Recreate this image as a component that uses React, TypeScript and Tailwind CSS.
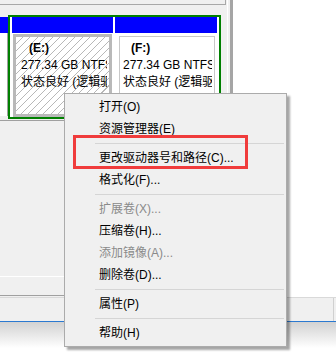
import React from "react";

type MenuEntry = { label: string; disabled?: boolean } | "sep";

const MENU: MenuEntry[] = [
  { label: "打开(O)" },
  { label: "资源管理器(E)" },
  "sep",
  { label: "更改驱动器号和路径(C)..." },
  { label: "格式化(F)..." },
  "sep",
  { label: "扩展卷(X)...", disabled: true },
  { label: "压缩卷(H)..." },
  { label: "添加镜像(A)...", disabled: true },
  { label: "删除卷(D)..." },
  "sep",
  { label: "属性(P)" },
  "sep",
  { label: "帮助(H)" },
];

const VolumeText = ({ letter }: { letter: string }) => (
  <div className="overflow-hidden whitespace-nowrap text-[12px] leading-[17px] text-black">
    <div className="pl-[8px] font-bold">({letter}:)</div>
    <div>277.34 GB NTFS</div>
    <div>状态良好 (逻辑驱动器)</div>
  </div>
);

const ContextMenu = () => (
  <div className="absolute left-[64px] top-[93px] w-[223px] border border-[#ababab] bg-[#f0f0f0] py-[2px] shadow-[3px_3px_2px_rgba(0,0,0,0.35)]">
    {MENU.map((item, i) =>
      item === "sep" ? (
        <div key={i} className="flex h-[7px] items-center pl-[30px] pr-[2px]">
          <div className="h-px w-full bg-[#d5d5d5]" />
        </div>
      ) : (
        <div
          key={i}
          className={`h-[22px] pl-[34px] text-[12px] leading-[22px] whitespace-nowrap ${
            item.disabled ? "text-[#8a8a8a]" : "text-black"
          }`}
        >
          {item.label}
        </div>
      )
    )}
  </div>
);

export default function App() {
  return (
    <div className="relative h-[359px] w-[336px] overflow-hidden bg-white font-['Liberation_Sans','Noto_Sans_CJK_SC',sans-serif]">
      <div className="flex h-[297px]">
        {/* disk map */}
        <div className="flex w-[233px]">
          <div className="flex w-[227px] flex-col bg-[#f0f0f0]">
            <div className="h-[5px] w-[226px] border-b border-r border-[#a8a8a8]" />
            <div className="mt-[10px] flex">
              {/* previous partition stub */}
              <div className="mt-[2px] flex w-[8px] flex-col">
                <div className="h-[16px] bg-[#0000ff]" />
                <div className="h-[83px] border-r border-[#a0a0a0] bg-white" />
              </div>
              {/* extended partition */}
              <div className="flex h-[104px] w-[213px] border-2 border-[#008000] bg-white pl-[2px] pr-[2px]">
                <div className="flex w-[101px] flex-col">
                  <div className="h-[16px] bg-[#0000ff]" />
                  <div className="mx-px mt-px flex-1 border-[3px] border-[#b9b9b9] bg-[repeating-linear-gradient(135deg,#ffffff_0px,#ffffff_4.3px,#b8b8b8_4.3px,#b8b8b8_5.3px)] pl-[5px] pr-[2px] pt-[3px]">
                    <VolumeText letter="E" />
                  </div>
                </div>
                <div className="ml-[2px] flex w-[102px] flex-col">
                  <div className="h-[16px] bg-[#0000ff]" />
                  <div className="flex-1 pl-[4px] pr-[2px] pt-[3px]">
                    <div className="h-full border-l border-r border-t border-[#c8c8c8] pl-[3px] pr-[2px] pt-[3px]">
                      <VolumeText letter="F" />
                    </div>
                  </div>
                </div>
              </div>
            </div>
            <div className="mt-px h-px bg-[#a0a0a0]" />
            <div className="h-[155px]" />
            <div className="h-px bg-white" />
            <div className="h-[18px]" />
            <div className="h-px bg-[#a0a0a0]" />
          </div>
          <div className="w-px bg-white" />
          <div className="w-[2px] bg-[#f0f0f0]" />
          <div className="w-[3px] bg-[#a5a5a5]" />
        </div>
        <div className="flex-1 bg-white" />
      </div>

      {/* status strip */}
      <div className="flex h-[25px] border-b border-t border-b-[#2b79d0] border-t-[#d9d9d9] bg-[#f0f0f0]">
        <div className="flex-1" />
        <div className="mr-[2px] w-px bg-[#d0d0d0]" />
      </div>
      <div className="h-[26px] bg-gradient-to-b from-[#d2d2d2] to-white" />

      <ContextMenu />

      {/* highlight */}
      <div className="absolute left-[73px] top-[135px] h-[34px] w-[175px] border-[3px] border-[#f03c3c]" />
    </div>
  );
}
